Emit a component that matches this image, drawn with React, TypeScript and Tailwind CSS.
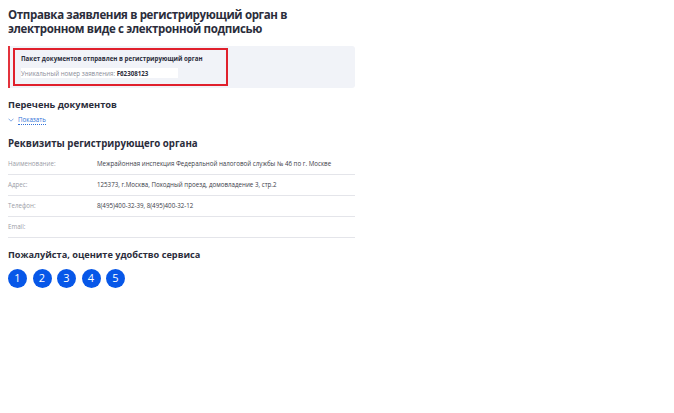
import React from 'react'

const font = { fontFamily: '"Open Sans", "Noto Sans", sans-serif' }

const rows = [
  { label: 'Наименование:', value: 'Межрайонная инспекция Федеральной налоговой службы № 46 по г. Москве' },
  { label: 'Адрес:', value: '125373, г.Москва, Походный проезд, домовладение 3, стр.2' },
  { label: 'Телефон:', value: '8(495)400-32-39, 8(495)400-32-12' },
  { label: 'Email:', value: '' },
]

export default function App() {
  return (
    <div className="min-h-[413px] w-[674px] bg-white text-[#2b2d3b]" style={font}>
      <div className="w-[355px] pl-2 pt-[8px]">
        <h1 className="text-[11.5px] font-bold leading-[14px] tracking-[-0.35px]">
          Отправка заявления в регистрирующий орган в<br />
          электронном виде с электронной подписью
        </h1>

        <div className="mt-[10px] flex h-[42px] rounded-r-[3px] border-l-2 border-[#e3323c] bg-[#f1f3f8] py-[2px] pl-[3px]">
          <div className="flex w-[215px] flex-col border-2 border-[#e0202c] px-[6px] pt-[4px]">
            <div className="text-[6.2px] font-bold leading-[9px]">
              Пакет документов отправлен в регистрирующий орган
            </div>
            <div className="mt-[5px] flex h-[10px] w-[157px] items-center bg-white text-[6.2px] leading-[9px]">
              <span className="text-[#8a8d98]">Уникальный номер заявления:&nbsp;</span>
              <span className="font-bold">F62308123</span>
            </div>
          </div>
        </div>

        <h2 className="mt-[10px] text-[9.3px] font-bold leading-[14px]">Перечень документов</h2>
        <div className="mt-[3px] flex items-center gap-[4px] text-[6.2px] leading-[9px] text-[#2f6fd8]">
          <svg width="6" height="4" viewBox="0 0 6 4" fill="none">
            <path d="M0.5 0.7 L3 3.2 L5.5 0.7" stroke="#6a96dc" strokeWidth="0.8" />
          </svg>
          <span className="border-b border-dotted border-[#2f6fd8]">Показать</span>
        </div>

        <h2 className="mt-[12px] text-[9.7px] font-bold leading-[14px]">Реквизиты регистрирующего органа</h2>

        <div className="mt-[3px]">
          {rows.map((r) => (
            <div key={r.label} className="flex h-[21px] items-center border-b border-[#e4e5ea] text-[6.2px]">
              <span className="w-[89px] text-[#9a9ca6]">{r.label}</span>
              <span className="text-[#3a3c48]">{r.value}</span>
            </div>
          ))}
        </div>

        <h2 className="mt-[10px] text-[9.2px] font-bold leading-[14px]">Пожалуйста, оцените удобство сервиса</h2>
        <div className="mt-[7px] flex gap-[5.5px]">
          {[1, 2, 3, 4, 5].map((n) => (
            <div
              key={n}
              className="flex h-[19px] w-[19px] items-center justify-center rounded-full bg-[#0757e8] text-[11px] text-white"
            >
              {n}
            </div>
          ))}
        </div>
      </div>
    </div>
  )
}
